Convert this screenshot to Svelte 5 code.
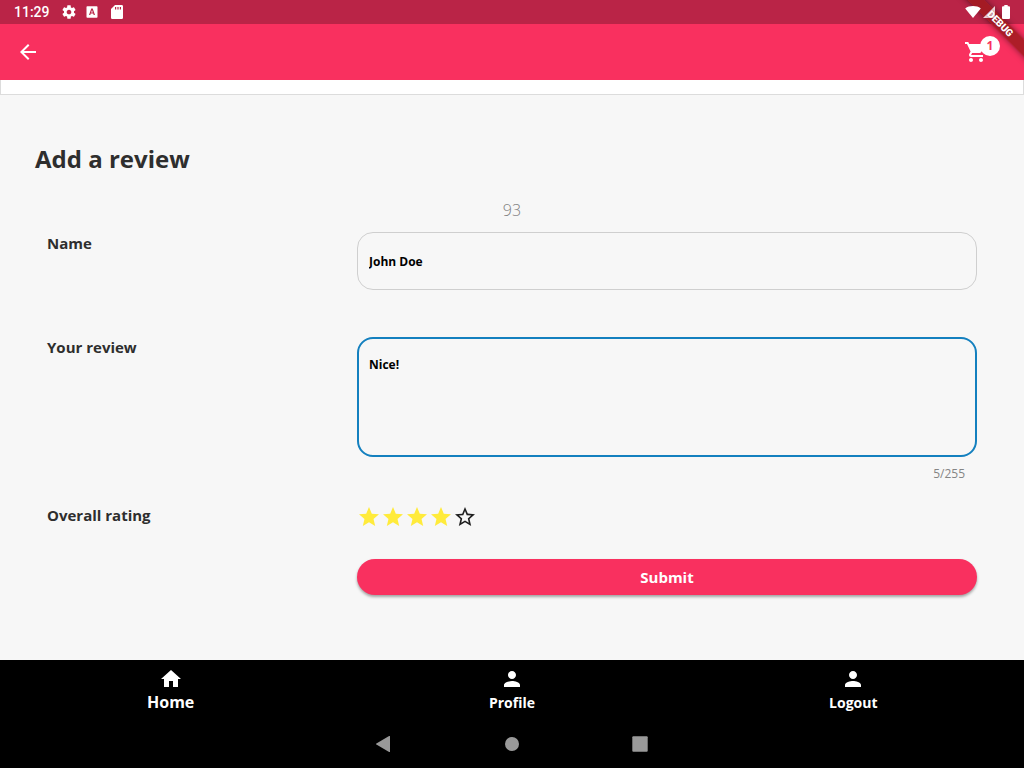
<script>
  let name = $state('John Doe');
  let review = $state('Nice!');
  let rating = $state(4);
  const limit = 255;
  const stars = [1, 2, 3, 4, 5];

  const homeIcon = 'M10 20v-6h4v6h5v-8h3L12 3 2 12h3v8z';
  const personIcon =
    'M12 12c2.21 0 4-1.79 4-4s-1.79-4-4-4-4 1.79-4 4 1.79 4 4 4zm0 2c-2.67 0-8 1.34-8 4v2h16v-2c0-2.66-5.33-4-8-4z';
  const tabs = [
    { label: 'Home', icon: homeIcon, active: true },
    { label: 'Profile', icon: personIcon, active: false },
    { label: 'Logout', icon: personIcon, active: false }
  ];

  const starFull = 'M12 17.27L18.18 21l-1.64-7.03L22 9.24l-7.19-.61L12 2 9.19 8.63 2 9.24l5.46 4.73L5.82 21z';
  const starEmpty =
    'M22 9.24l-7.19-.62L12 2 9.19 8.63 2 9.24l5.46 4.73L5.82 21 12 17.27 18.18 21l-1.63-7.03L22 9.24zM12 15.4l-3.76 2.27 1-4.28-3.32-2.88 4.38-.38L12 6.1l1.71 4.04 4.38.38-3.32 2.88 1 4.28L12 15.4z';
</script>

<div class="screen">
  <header class="top">
    <div class="ribbon band"></div>
    <div class="ribbon word">DEBUG</div>
    <div class="status">
      <span class="clock">11:29</span>
      <svg class="gear" width="16" height="16" viewBox="0 0 24 24"><path fill="currentColor" d="M19.43 12.98c.04-.32.07-.64.07-.98s-.03-.66-.07-.98l2.11-1.65c.19-.15.24-.42.12-.64l-2-3.46c-.12-.22-.39-.3-.61-.22l-2.49 1c-.52-.4-1.08-.73-1.69-.98l-.38-2.65C14.46 2.18 14.25 2 14 2h-4c-.25 0-.46.18-.49.42l-.38 2.65c-.61.25-1.17.59-1.69.98l-2.49-1c-.23-.09-.49 0-.61.22l-2 3.46c-.13.22-.07.49.12.64l2.11 1.65c-.04.32-.07.65-.07.98s.03.66.07.98l-2.11 1.65c-.19.15-.24.42-.12.64l2 3.46c.12.22.39.3.61.22l2.49-1c.52.4 1.08.73 1.69.98l.38 2.65c.03.24.24.42.49.42h4c.25 0 .46-.18.49-.42l.38-2.65c.61-.25 1.17-.59 1.69-.98l2.49 1c.23.09.49 0 .61-.22l2-3.46c.12-.22.07-.49-.12-.64l-2.11-1.65zM12 15.5c-1.93 0-3.5-1.57-3.5-3.5s1.57-3.5 3.5-3.5 3.5 1.57 3.5 3.5-1.57 3.5-3.5 3.5z"/></svg>
      <svg class="app" width="12" height="12" viewBox="0 0 12 12"><path fill="currentColor" fill-rule="evenodd" d="M1.3.3h9.400a.8.8 0 0 1 .8.8v9.800a.8.8 0 0 1-.8.8H1.300a.8.8 0 0 1-.8-.8V1.100a.8.8 0 0 1 .8-.8zM5.300 2.500L3 9h1.300l.4-1.400h2.500L7.700 9H9L6.700 2.500zM6 4l.8 2.500H5.100z"/></svg>
      <svg class="card" width="12" height="14" viewBox="0 0 12 14"><path fill="currentColor" fill-rule="evenodd" d="M4 0h6.700A1.300 1.300 0 0 1 12 1.300v11.400a1.300 1.300 0 0 1-1.300 1.300H1.300A1.300 1.300 0 0 1 0 12.700V4zM4 2v2.500h1.200V2zM6.400 2v2.500h1.200V2zM8.800 2v2.500H10V2z"/></svg>
      <span class="spacer"></span>
      <svg class="over" width="16" height="12" viewBox="0 0 16 12"><path fill="currentColor" d="M8 12L.2 2.400C2.300.8 5 0 8 0s5.700.8 7.800 2.400z"/></svg>
      <svg class="over signal" width="12" height="12" viewBox="0 0 12 12"><path fill="currentColor" d="M12 0v12H0z"/></svg>
      <svg class="over battery" width="8" height="14" viewBox="0 0 8 14"><path fill="currentColor" d="M2.300 0h3.400v1.300H7a1 1 0 0 1 1 1V13a1 1 0 0 1-1 1H1a1 1 0 0 1-1-1V2.300a1 1 0 0 1 1-1h1.300z"/></svg>
    </div>
    <div class="bar">
      <button class="icon" aria-label="Back">
        <svg width="24" height="24" viewBox="0 0 24 24"><path fill="currentColor" d="M20 11H7.830l5.590-5.590L12 4l-8 8 8 8 1.410-1.410L7.830 13H20z"/></svg>
      </button>
      <button class="icon cart" aria-label="Cart">
        <svg width="24" height="24" viewBox="0 0 24 24"><path fill="currentColor" d="M7 18c-1.100 0-1.990.9-1.990 2S5.900 22 7 22s2-.9 2-2-.9-2-2-2zM1 2v2h2l3.600 7.590-1.350 2.450c-.16.28-.25.61-.25.960 0 1.100.9 2 2 2h12v-2H7.420c-.14 0-.25-.11-.25-.25l.03-.12.900-1.630h7.450c.75 0 1.410-.41 1.750-1.030l3.580-6.490A1 1 0 0 0 20 4H5.210l-.94-2H1zm16 16c-1.100 0-1.990.9-1.990 2s.89 2 1.990 2 2-.9 2-2-.9-2-2-2z"/></svg>
        <span class="badge">1</span>
      </button>
    </div>
  </header>
  <div class="strip"></div>

  <main>
    <h1>Add a review</h1>
    <p class="number">93</p>
    <form onsubmit={(e) => e.preventDefault()}>
      <label for="name">Name</label>
      <input id="name" class="field" type="text" bind:value={name} />

      <label for="review">Your review</label>
      <div class="review">
        <textarea id="review" class="field" maxlength={limit} bind:value={review}></textarea>
        <span class="count">{review.length}/{limit}</span>
      </div>

      <span class="caption" id="rating">Overall rating</span>
      <div class="stars" role="radiogroup" aria-labelledby="rating">
        {#each stars as n}
          <label class="star" class:on={n <= rating}>
            <input type="radio" name="rating" value={n} aria-label={String(n)} bind:group={rating} />
            <svg width="24" height="24" viewBox="0 0 24 24"><path fill="currentColor" d={n <= rating ? starFull : starEmpty} /></svg>
          </label>
        {/each}
      </div>

      <button class="submit" type="submit">Submit</button>
    </form>
  </main>

  <nav class="tabs">
    {#each tabs as tab}
      <button class:active={tab.active}>
        <svg viewBox="0 0 24 24"><path fill="currentColor" d={tab.icon} /></svg>
        <span>{tab.label}</span>
      </button>
    {/each}
  </nav>
  <div class="system">
    <button aria-label="Back"><svg width="16" height="16" viewBox="0 0 16 16"><path fill="currentColor" d="M14 .6v14.800a.6.6 0 0 1-.9.500L.4 8.500a.6.6 0 0 1 0-1L13.100.1a.6.6 0 0 1 .9.500z"/></svg></button>
    <button aria-label="Home"><svg width="16" height="16" viewBox="0 0 16 16"><circle fill="currentColor" cx="8" cy="8" r="7"/></svg></button>
    <button aria-label="Overview"><svg width="16" height="16" viewBox="0 0 16 16"><rect fill="currentColor" x=".3" y=".3" width="15.400" height="15.400" rx="1"/></svg></button>
  </div>
</div>

<style>
  :global(body) {
    margin: 0;
  }
  .screen {
    min-height: 100vh;
    display: flex;
    flex-direction: column;
    background: #f7f7f7;
    color: #2e2e2e;
    font-family: "Open Sans", sans-serif;
    font-size: 15px;
  }
  .screen :global(*) {
    box-sizing: border-box;
  }
  svg {
    display: block;
    flex: none;
  }
  button {
    border: 0;
    padding: 0;
    background: none;
    color: inherit;
    font: inherit;
  }
  .top {
    position: relative;
    overflow: hidden;
    background: #f9305f;
    color: #fff;
  }
  .ribbon {
    position: absolute;
    top: 18px;
    right: -56px;
    width: 160px;
    height: 12px;
    transform: rotate(45deg);
    font: 900 10px/12px Roboto, sans-serif;
    text-align: center;
    pointer-events: none;
  }
  .band {
    background: rgba(160, 26, 30, 0.85);
    box-shadow: 0 0 6px rgba(0, 0, 0, 0.5);
    z-index: 1;
  }
  .word {
    text-shadow: 0 0 2px rgba(130, 20, 40, 0.8);
    z-index: 3;
  }
  .over {
    position: relative;
    z-index: 2;
  }
  .status {
    height: 24px;
    padding: 0 14px;
    display: flex;
    align-items: center;
    gap: 2px;
    background: rgba(0, 0, 0, 0.25);
  }
  .clock {
    font: 500 14px/24px Roboto, sans-serif;
  }
  .gear {
    margin-left: 9px;
  }
  .app {
    margin-left: 7px;
  }
  .card {
    margin-left: 11px;
  }
  .spacer {
    flex: 1;
  }
  .signal {
    opacity: 0.8;
  }
  .battery {
    margin-left: 5px;
  }
  .bar {
    height: 56px;
    padding: 0 16px;
    display: flex;
    align-items: center;
    justify-content: space-between;
  }
  .icon {
    position: relative;
  }
  .cart {
    margin-right: 20px;
  }
  .badge {
    position: absolute;
    top: -4px;
    left: 16px;
    width: 20px;
    height: 20px;
    border-radius: 50%;
    background: #fff;
    color: #f9305f;
    font: 700 12px/20px "Open Sans", sans-serif;
    text-align: center;
  }
  .strip {
    height: 15px;
    background: #fff;
    border: 1px solid #dcdcdc;
    border-top: 0;
  }
  main {
    flex: 1;
    padding: 48px 35px 64px;
  }
  h1 {
    margin: 0;
    font-size: 24px;
    line-height: 32px;
    font-weight: 700;
  }
  .number {
    margin: 23px 0 10px;
    font-size: 16px;
    line-height: 24px;
    font-weight: 300;
    color: #808080;
    text-align: center;
  }
  form {
    padding: 0 12px;
    display: grid;
    grid-template-columns: 1fr 2fr;
    align-items: start;
  }
  form > label,
  .caption {
    font-weight: 700;
    line-height: 22px;
  }
  .field {
    display: block;
    width: 100%;
    margin: 0;
    border: 1px solid #cfcfcf;
    border-radius: 16px;
    outline: 0;
    background: transparent;
    color: #000;
    font: 700 12px/18px "Open Sans", sans-serif;
  }
  input.field {
    height: 58px;
    padding: 0 11px;
    margin-bottom: 46px;
  }
  textarea.field {
    height: 120px;
    margin-top: 1px;
    padding: 17px 10px;
    border: 2px solid #1480bf;
    resize: none;
  }
  .count {
    display: block;
    padding: 9px 12px 0;
    line-height: 16px;
    font-size: 12px;
    color: #858585;
    text-align: right;
  }
  .review {
    margin-bottom: 22px;
  }
  .stars {
    display: flex;
    padding-top: 1px;
    margin-bottom: 30px;
  }
  .star {
    position: relative;
    color: #1f1f1f;
  }
  .star.on {
    color: #ffeb3b;
  }
  .star input {
    position: absolute;
    inset: 0;
    margin: 0;
    opacity: 0;
  }
  .submit {
    grid-column: 2;
    height: 36px;
    border-radius: 18px;
    background: #f9305f;
    color: #fff;
    font-weight: 700;
    box-shadow: 0 2px 3px rgba(0, 0, 0, 0.35);
  }
  .tabs {
    height: 60px;
    display: grid;
    grid-template-columns: repeat(3, 1fr);
    background: #000;
    color: #fff;
  }
  .tabs button {
    display: flex;
    flex-direction: column;
    align-items: center;
    padding-top: 7px;
    font-size: 14px;
    line-height: 24px;
    font-weight: 700;
  }
  .tabs svg {
    width: 24px;
    height: 24px;
  }
  .tabs .active {
    font-size: 16px;
    line-height: 22px;
  }
  .system {
    height: 48px;
    display: flex;
    align-items: center;
    justify-content: center;
    gap: 112px;
    background: #000;
    color: #999;
  }
</style>
